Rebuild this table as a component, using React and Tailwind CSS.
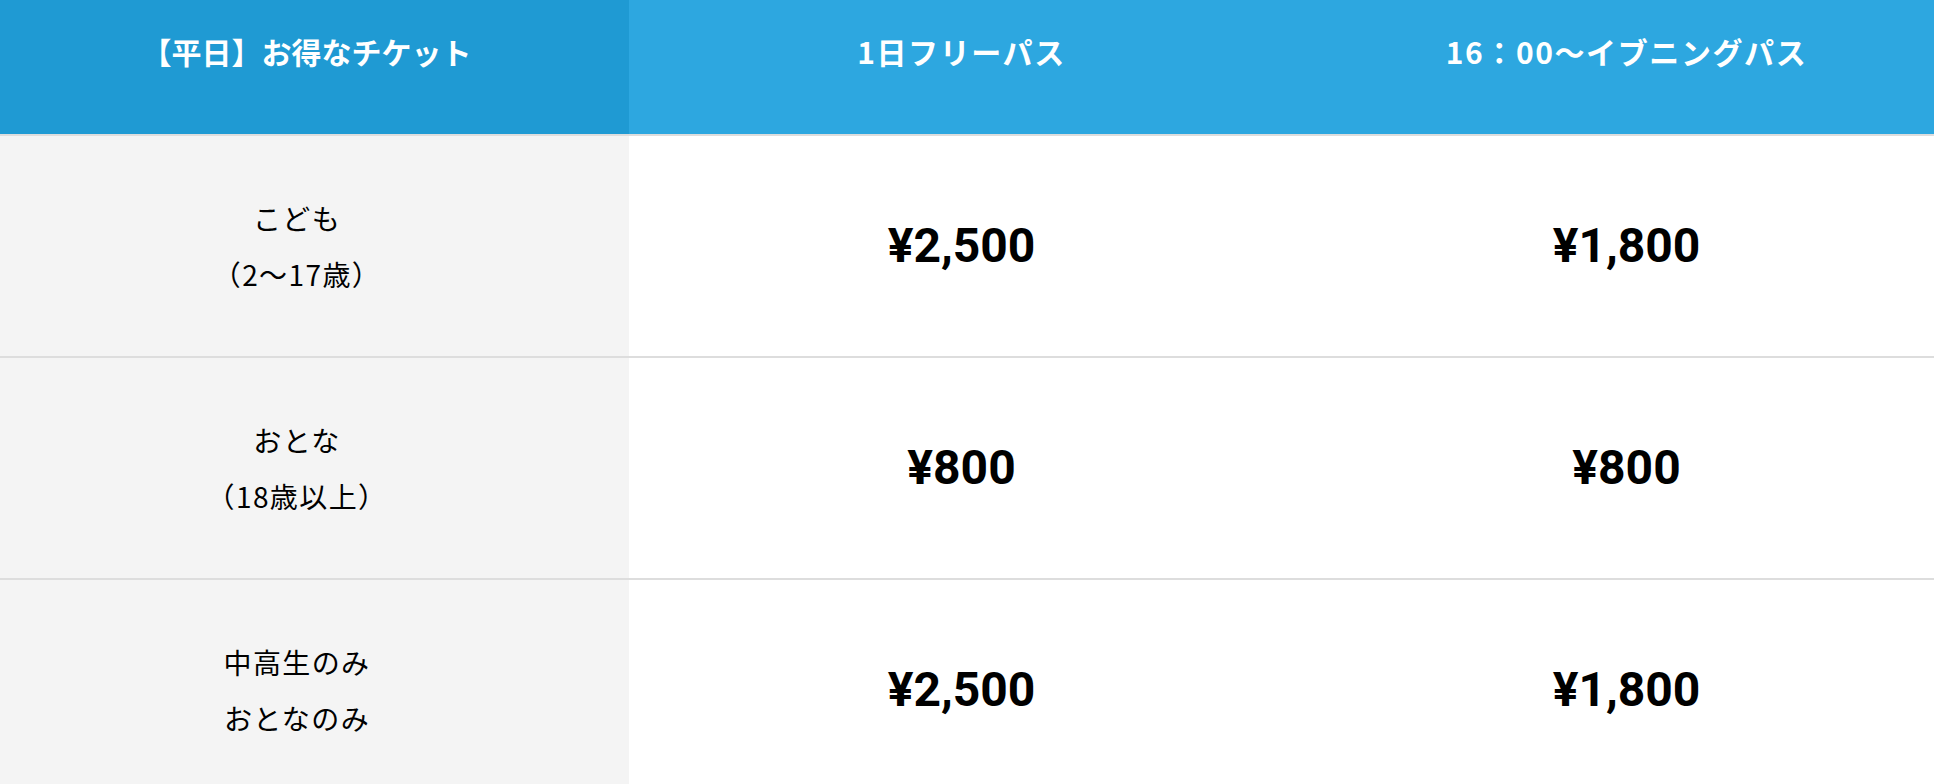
const jp = "font-['Noto_Sans_CJK_JP','Noto_Sans',sans-serif]";

const rows = [
  { label: ["こども", "（2〜17歳）"], day: "¥2,500", evening: "¥1,800" },
  { label: ["おとな", "（18歳以上）"], day: "¥800", evening: "¥800" },
  { label: ["中高生のみ", "おとなのみ"], day: "¥2,500", evening: "¥1,800" },
];

function HeadCell({ children, dark }) {
  return (
    <div
      className={`flex h-[134px] justify-center pt-[27px] text-[30px] font-bold leading-[48px] text-white ${jp} ${
        dark ? "bg-[#1f9ad3] pr-[16px]" : "bg-[#2da7e0] tracking-[1.6px]"
      }`}
    >
      {children}
    </div>
  );
}

function Price({ children }) {
  return (
    <div className="flex h-[222px] items-center justify-center border-b-2 border-[#dddddd] bg-white font-['Roboto',sans-serif] text-[48px] font-bold text-black">
      {children}
    </div>
  );
}

export default function App() {
  return (
    <div className="h-[784px] w-full overflow-hidden bg-white">
      <div className="grid w-[1959px] grid-cols-[629px_665px_665px]">
        <HeadCell dark>【平日】お得なチケット</HeadCell>
        <HeadCell>1日フリーパス</HeadCell>
        <HeadCell>16：00〜イブニングパス</HeadCell>
        <div className="col-span-3 h-[2px] bg-[#dddddd]" />
        {rows.map((r, i) => (
          <div key={i} className="contents">
            <div
              className={`flex h-[222px] flex-col items-center justify-center border-b-2 border-[#dddddd] bg-[#f4f4f4] pr-[35px] text-[28px] leading-[56px] tracking-[1.4px] text-black ${jp}`}
            >
              <span>{r.label[0]}</span>
              <span>{r.label[1]}</span>
            </div>
            <Price>{r.day}</Price>
            <Price>{r.evening}</Price>
          </div>
        ))}
      </div>
    </div>
  );
}
